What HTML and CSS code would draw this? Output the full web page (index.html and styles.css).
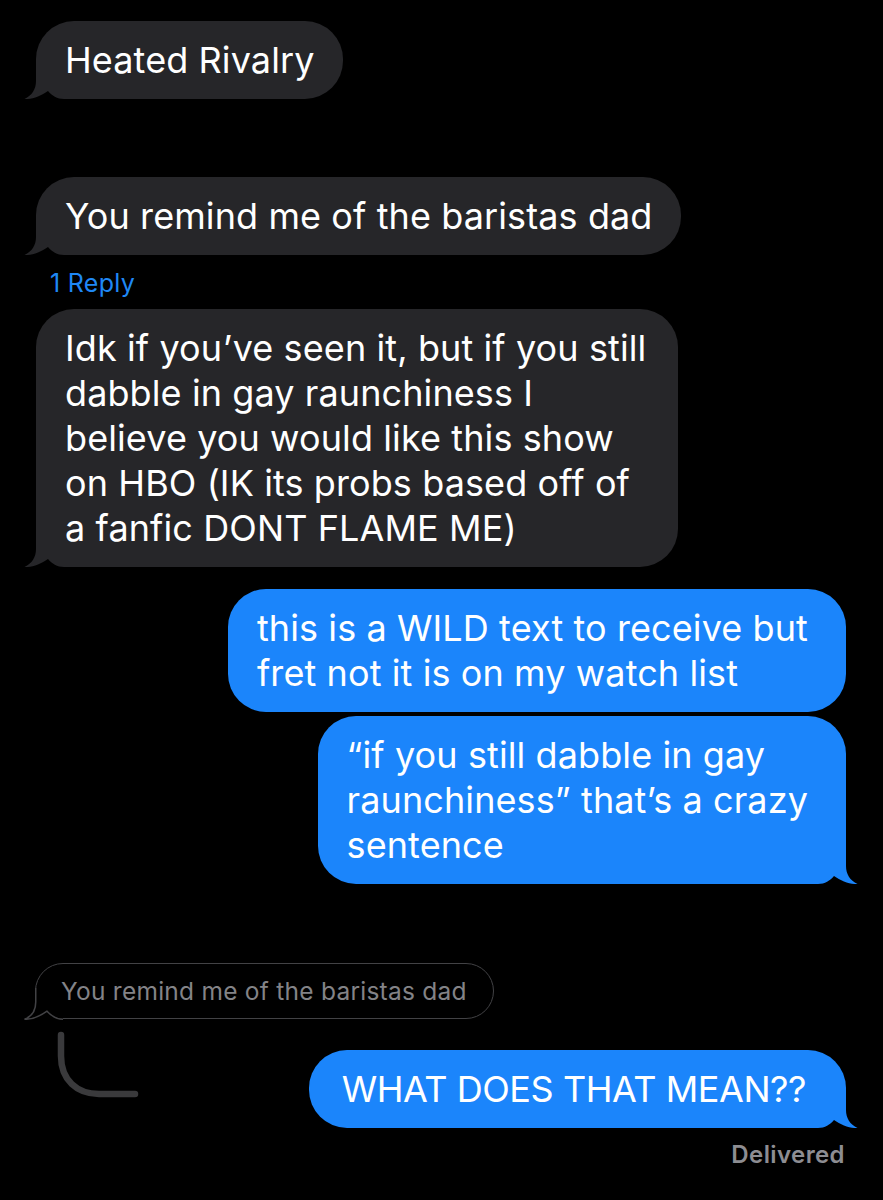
FILE: index.html
```html
<!DOCTYPE html>
<html lang="en">
<head>
    <meta charset="UTF-8">
    <meta name="viewport" content="width=device-width, initial-scale=1.0">
    <title>Messages</title>
    <link rel="stylesheet" href="styles.css">
</head>
<body>

<div class="thread">

    <div class="bubble them">
        Heated Rivalry
        <svg class="tail" viewBox="0 0 40 32"><rect x="12" width="28" height="32"/><path d="M40,0 L12,0 L12,14 C12,22 8,28.5 0.5,32 C8,32.5 17,29 24,24 C28,28.5 33,32 40,32 Z"/></svg>
    </div>

    <div class="bubble them gap-big">
        You remind me of the baristas dad
        <svg class="tail" viewBox="0 0 40 32"><rect x="12" width="28" height="32"/><path d="M40,0 L12,0 L12,14 C12,22 8,28.5 0.5,32 C8,32.5 17,29 24,24 C28,28.5 33,32 40,32 Z"/></svg>
    </div>

    <div class="reply-count">1 Reply</div>

    <div class="bubble them wrapped">
        Idk if you’ve seen it, but if you still<br>
        dabble in gay raunchiness I<br>
        believe you would like this show<br>
        on HBO (IK its probs based off of<br>
        a fanfic DONT FLAME ME)
        <svg class="tail" viewBox="0 0 40 32"><rect x="12" width="28" height="32"/><path d="M40,0 L12,0 L12,14 C12,22 8,28.5 0.5,32 C8,32.5 17,29 24,24 C28,28.5 33,32 40,32 Z"/></svg>
    </div>

    <div class="bubble me no-tail gap-mid">
        this is a WILD text to receive but<br>
        fret not it is on my watch list
    </div>

    <div class="bubble me gap-small">
        “if you still dabble in gay<br>
        raunchiness” that’s a crazy<br>
        sentence
        <svg class="tail" viewBox="0 0 40 32"><rect x="12" width="28" height="32"/><path d="M40,0 L12,0 L12,14 C12,22 8,28.5 0.5,32 C8,32.5 17,29 24,24 C28,28.5 33,32 40,32 Z"/></svg>
    </div>

    <div class="reply-group">
        <div class="quoted">
            You remind me of the baristas dad
            <svg class="tail" viewBox="0 0 40 32"><rect x="12" width="28" height="32"/><path class="tail-fill" d="M40,0 L12,0 L12,14 C12,22 8,28.5 0.5,32 C8,32.5 17,29 24,24 C28,28.5 33,32 40,32 Z"/><path class="tail-line" d="M12.75,0 L12.75,14 C12.75,22.5 8.5,28.6 1.5,31.25 C8.5,31.5 17,28.3 24,23.2 C28,27.6 33,31.25 40,31.25"/></svg>
        </div>

        <div class="reply-row">
            <svg class="thread-line" viewBox="0 0 90 75"><path d="M6,7 L6,28 C6,52 22,66 44,66 L80,66"/></svg>
            <div class="bubble me">
                WHAT DOES THAT MEAN??
                <svg class="tail" viewBox="0 0 40 32"><rect x="12" width="28" height="32"/><path d="M40,0 L12,0 L12,14 C12,22 8,28.5 0.5,32 C8,32.5 17,29 24,24 C28,28.5 33,32 40,32 Z"/></svg>
            </div>
        </div>
    </div>

    <div class="status">Delivered</div>

</div>

</body>
</html>
```

FILE: styles.css
```css
body {
    margin: 0;
    padding: 0;
    background-color: #000;
    font-family: Inter, "Noto Sans", sans-serif;
    color: #fff;
}

.thread {
    display: flex;
    flex-direction: column;
    padding: 21px 37px 40px 36px;
}

.bubble {
    position: relative;
    padding: 17px 28px 16px 29px;
    border-radius: 38px;
    font-size: 36px;
    line-height: 45px;
    letter-spacing: 0.1px;
    white-space: nowrap;
}

.them {
    align-self: flex-start;
    background-color: #262629;
    border-bottom-left-radius: 0;
}

.me {
    align-self: flex-end;
    background-color: #1b85fb;
    padding-right: 38px;
    border-bottom-right-radius: 0;
}

.me.no-tail {
    border-bottom-right-radius: 38px;
}

.wrapped {
    padding-right: 32px;
}

.gap-big {
    margin-top: 78px;
}

.gap-mid {
    margin-top: 22px;
}

.gap-small {
    margin-top: 4px;
}

/* bubble tails */
.tail {
    position: absolute;
    bottom: 0;
    width: 40px;
    height: 32px;
}

.tail rect {
    fill: #000;
}

.them .tail {
    left: -12px;
}

.them .tail path {
    fill: #262629;
}

.me .tail {
    right: -12px;
    transform: scaleX(-1);
}

.me .tail path {
    fill: #1b85fb;
}

.reply-count {
    margin: 15px 0 13px 14px;
    font-size: 25px;
    line-height: 26px;
    letter-spacing: 0.3px;
    color: #1f88f5;
}

/* inline reply */
.reply-group {
    display: flex;
    flex-direction: column;
    margin-top: 79px;
}

.quoted {
    position: relative;
    align-self: flex-start;
    padding: 0 26px 0 25px;
    height: 54px;
    line-height: 54px;
    border: 1.5px solid #424245;
    border-radius: 28px;
    border-bottom-left-radius: 0;
    font-size: 24.5px;
    letter-spacing: 0.25px;
    color: #838387;
    white-space: nowrap;
    margin-left: -1px;
}

.quoted .tail {
    left: -13.5px;
    bottom: -1.5px;
}

.quoted .tail .tail-fill {
    fill: #000;
}

.quoted .tail .tail-line {
    fill: none;
    stroke: #424245;
    stroke-width: 1.5;
}

.reply-row {
    display: flex;
    align-items: flex-start;
    margin-top: 9px;
}

.thread-line {
    width: 90px;
    height: 75px;
    margin-left: 19px;
}

.thread-line path {
    fill: none;
    stroke: #3a3a3c;
    stroke-width: 6.5;
    stroke-linecap: round;
}

.reply-row .bubble {
    margin-left: auto;
    margin-top: 22px;
    padding-left: 33px;
    padding-right: 40px;
    letter-spacing: -0.45px;
}

.status {
    align-self: flex-end;
    margin-top: 14px;
    margin-right: 1px;
    font-size: 24px;
    line-height: 26px;
    letter-spacing: 0.4px;
    font-weight: 600;
    color: #8d8d92;
}
```
